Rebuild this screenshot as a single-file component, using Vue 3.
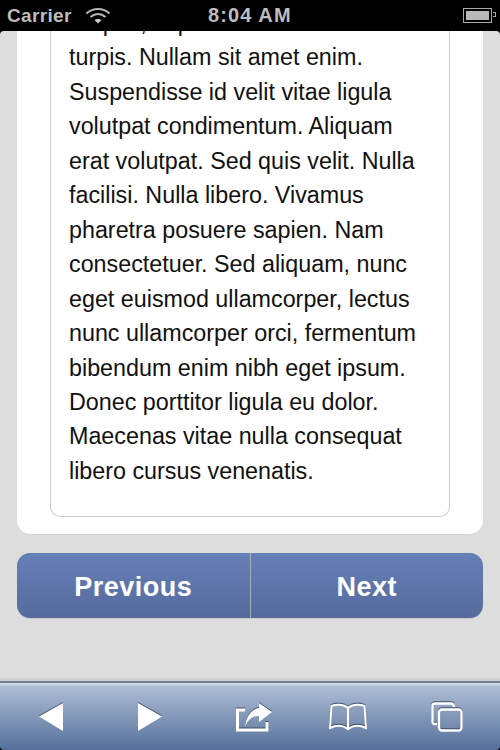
<template>
  <div class="phone">
    <div class="status">
      <span class="carrier">Carrier</span>
      <svg class="wifi" width="26" height="17" viewBox="0 0 26 17">
        <path d="M1.5 6.5 C8 0.5 18 0.5 24.5 6.5" fill="none" stroke="#b8b8b8" stroke-width="2.2" />
        <path d="M5.5 10 C10 6 16 6 20.5 10" fill="none" stroke="#b8b8b8" stroke-width="2.2" />
        <path d="M13 16.5 L9.5 13 C11.5 11.6 14.5 11.6 16.5 13 Z" fill="#d0d0d0" />
      </svg>
      <span class="time">8:04 AM</span>
      <span class="battery"><i></i></span>
    </div>

    <div class="content">
      <div class="card">
        <div class="inner">
          <p>{{ text }}</p>
        </div>
      </div>
      <div class="pager">
        <a>Previous</a>
        <a>Next</a>
      </div>
    </div>

    <div class="toolbar">
      <svg width="24" height="29" viewBox="0 0 24 29"><path d="M0 14.5 L24 1 V29 Z" fill="#fff" /></svg>
      <svg width="24" height="29" viewBox="0 0 24 29"><path d="M24 14.5 L0 1 V29 Z" fill="#fff" /></svg>
      <svg width="47" height="30" viewBox="-11 0 47 30">
        <path d="M9 8 H1.5 V28 H31 V20" fill="none" stroke="#fff" stroke-width="3" />
        <path d="M9 25 C10 14 16 7 23 6 V1 L36 10 L23 20 V14 C17 14 12 17 9 25 Z" fill="#fff" />
      </svg>
      <svg width="38" height="27" viewBox="0 0 38 27" fill="none" stroke="#fff" stroke-width="2">
        <path d="M19 5 C15 1 7 1 2.5 3 L1 25 C7 22 14 22 19 26 C24 22 31 22 37 25 L35.5 3 C31 1 23 1 19 5 V26" />
      </svg>
      <svg width="32" height="30" viewBox="0 0 32 30" fill="none" stroke="#fff" stroke-width="2.4">
        <path d="M6 22 H4 Q1.5 22 1.5 19.5 V4 Q1.5 1.5 4 1.5 H20 Q23 1.5 23 5" />
        <rect x="8" y="7.5" width="22.5" height="21" rx="3" />
      </svg>
    </div>
  </div>
</template>

<script setup>
const text = 'Aliquet, sapien nec dui lorem turpis. Nullam sit amet enim. Suspendisse id velit vitae ligula volutpat condimentum. Aliquam erat volutpat. Sed quis velit. Nulla facilisi. Nulla libero. Vivamus pharetra posuere sapien. Nam consectetuer. Sed aliquam, nunc eget euismod ullamcorper, lectus nunc ullamcorper orci, fermentum bibendum enim nibh eget ipsum. Donec porttitor ligula eu dolor. Maecenas vitae nulla consequat libero cursus venenatis.'
</script>

<style>
html, body { margin:0; background:#000; }
</style>

<style scoped>
.phone { width:500px; height:750px; display:flex; flex-direction:column; overflow:hidden; background:#000;
  font-family:"Liberation Sans", Arial, sans-serif; }

.status { height:31px; flex:none; background:#000; color:#bdbdbd; display:flex; align-items:center;
  position:relative; padding:0 5px 0 7px; box-sizing:border-box; font-weight:bold; }
.carrier { font-size:19px; letter-spacing:0.35px; }
.wifi { margin-left:13px; }
.time { position:absolute; left:208px; top:4px; font-size:20px; letter-spacing:1.1px; }
.battery { margin-left:auto; width:29px; height:15px; border:1px solid #aaa; box-sizing:border-box; padding:2px; margin-right:3px; position:relative; }
.battery i { display:block; height:100%; background:#b8b8b8; }
.battery::after { content:""; position:absolute; right:-5px; top:3px; width:3px; height:5px; border:1px solid #aaa; border-left:0; box-sizing:border-box; }

.content { flex:1; padding:0 17px; min-height:0; overflow:hidden; background:#ddd; border-radius:4px 4px 0 0; }
.card { background:#fff; border-radius:0 0 14px 14px; padding:0 33px 17px; border-bottom:1px solid #d4d4d4; margin-top:-25px; }
.inner { border:1px solid #ccc; border-top:0; border-radius:0 0 10px 10px; padding:0 18px 28px; }
.inner p { margin:0; font-size:23.3px; line-height:34.45px; color:#111; }

.pager { margin-top:18px; height:65px; display:flex; border-radius:13px; overflow:hidden;
  background:linear-gradient(#6580b8, #566a9c); box-shadow:0 1px 0 #ccc; }
.pager a { flex:1; display:flex; align-items:center; justify-content:center; padding-top:3px; box-sizing:border-box; color:#fff; font-size:27px; font-weight:bold; letter-spacing:0.5px; }
.pager a + a { border-left:1px solid #a9aeb8; }

.toolbar { height:69px; flex:none; box-sizing:border-box; border-top:2px solid #6f7f90; position:relative;
  background:linear-gradient(#d5dde8 0, #d5dde8 1px, #aebdd4 3px, #54709a 100%); display:grid; grid-template-columns:repeat(5, 99px); padding:0 1px;
  place-items:center; border-radius:0 0 4px 4px; box-shadow:0 -3px 0 #d2d2d2; }
.toolbar svg { filter:drop-shadow(0 -1px 0 rgba(45,58,82,.75)); }
</style>
